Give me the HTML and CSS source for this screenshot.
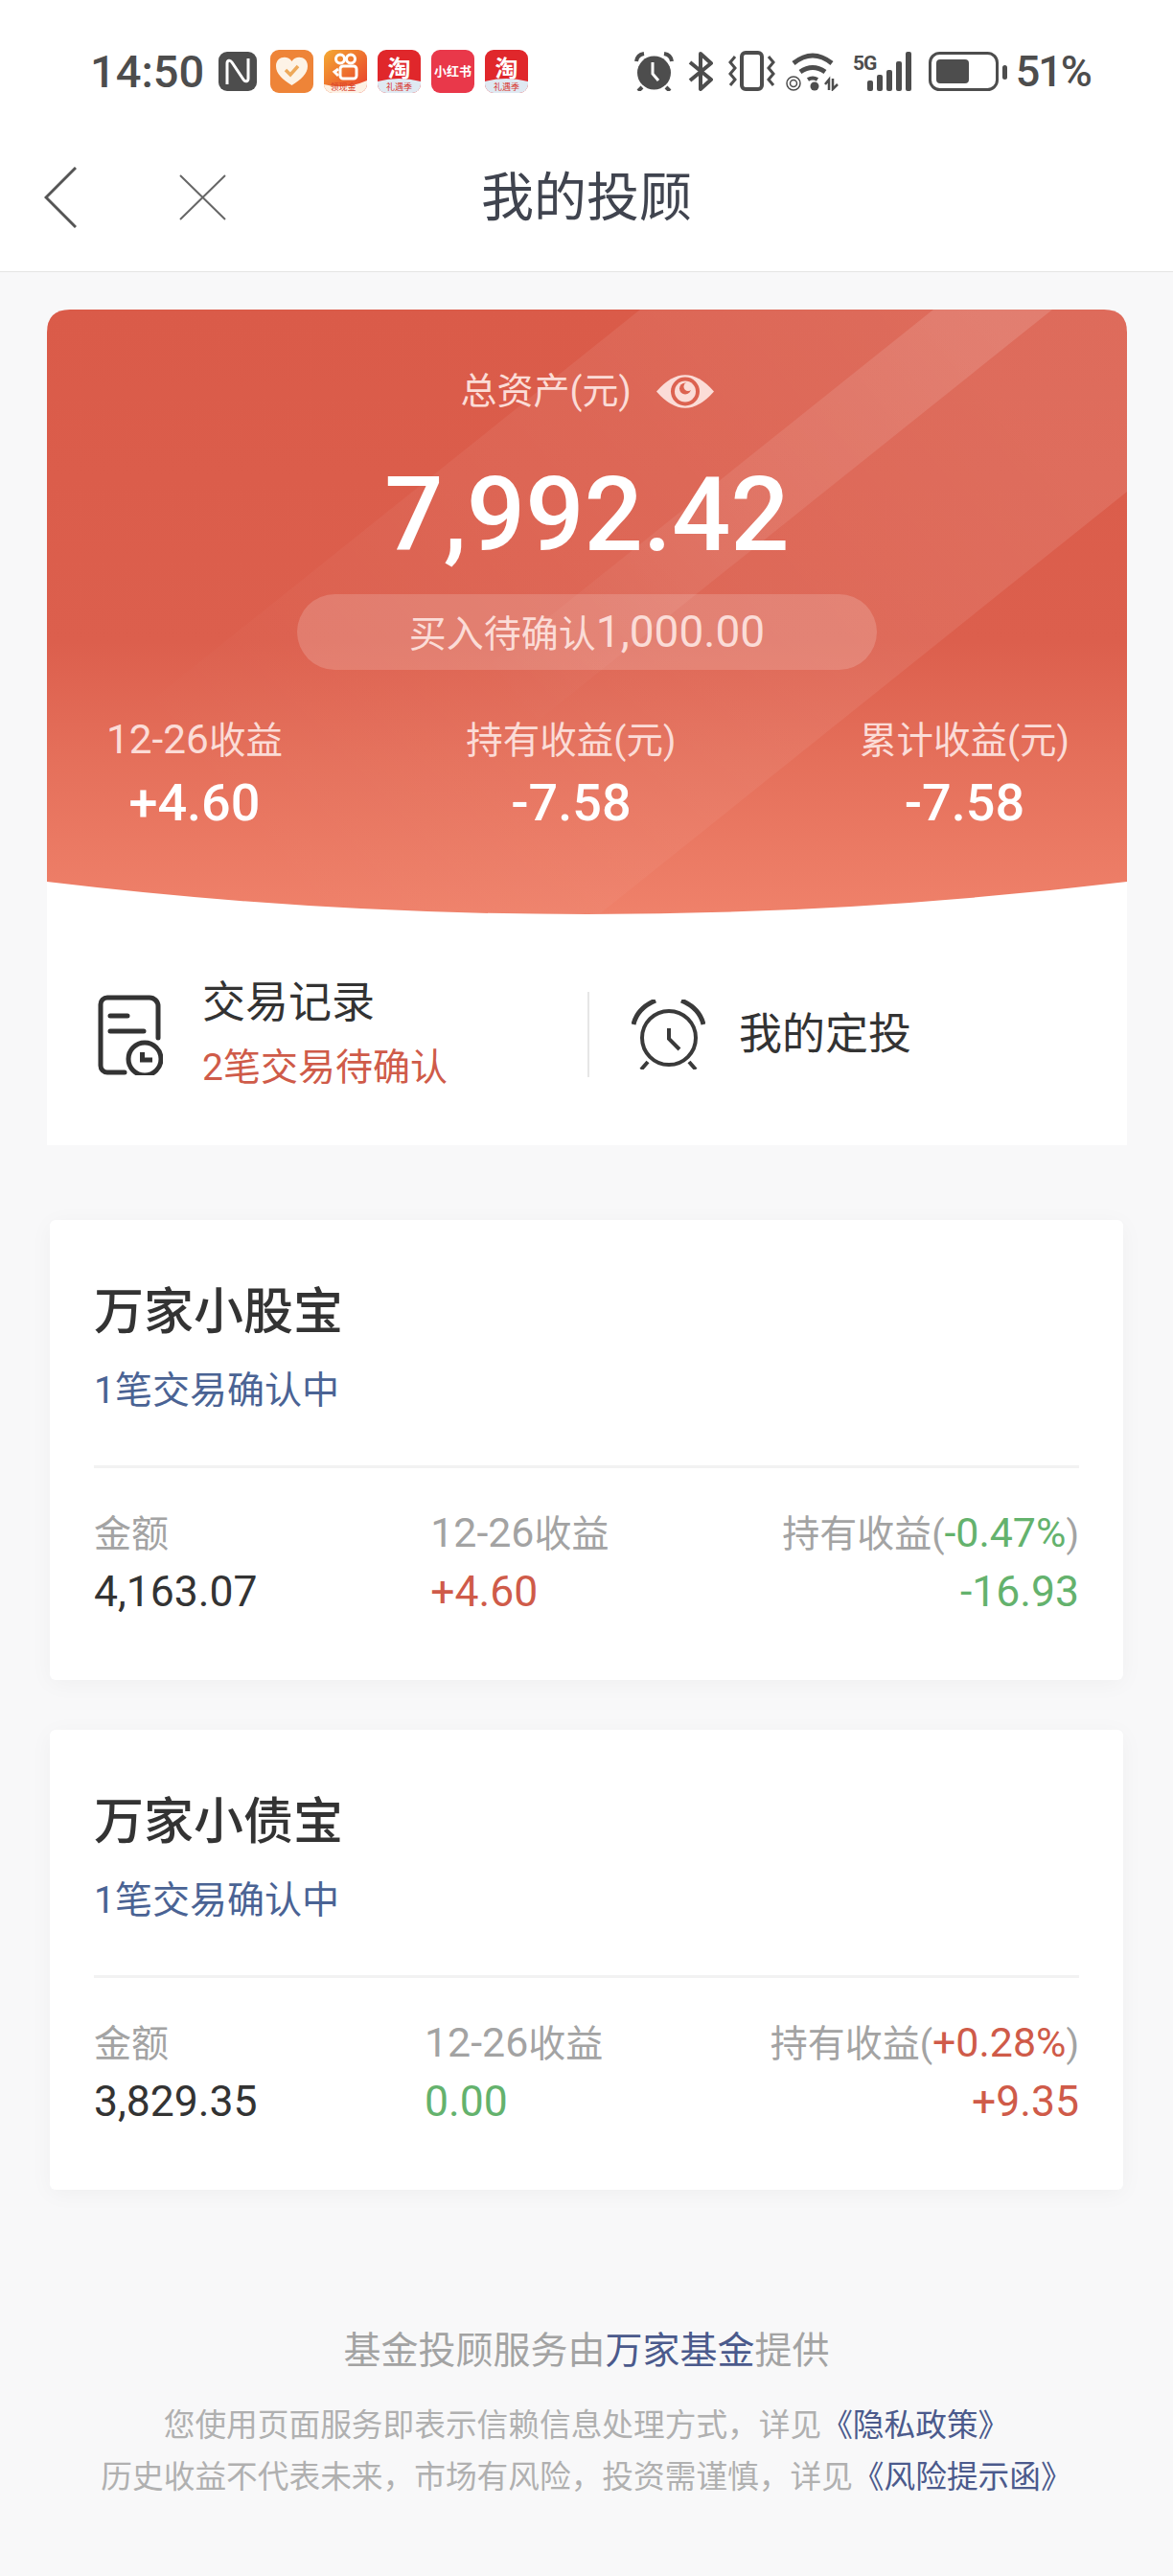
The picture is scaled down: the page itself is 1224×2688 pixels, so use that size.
FILE: index.html
```html
<!DOCTYPE html>
<html lang="zh-CN">
<head>
  <meta charset="UTF-8" />
  <title>我的投顾</title>
  <link rel="stylesheet" href="styles.css">
</head>
<body>

  <!-- status bar -->
  <div class="status">
    <div class="status-left">
      <span class="time">14:50</span>
      <svg class="nfc" width="40" height="41" viewBox="0 0 40 41">
        <rect width="40" height="41" rx="9" fill="#4d4d4d"/>
        <path d="M9 34V12c0-3 3-4 5-1l12 18c2 3 5 2 5-1V7" fill="none" stroke="#fff" stroke-width="3"/>
      </svg>
      <svg class="app" width="45" height="45" viewBox="0 0 45 45">
        <rect width="45" height="45" rx="9" fill="#ee8438"/>
        <path d="M22.5 37C13 31 6 25 6 17c0-10 12-12 16.5-5C27 5 39 7 39 17c0 8-7 14-16.5 20z" fill="#fdf3e6"/>
        <path d="M16 21l5 5 8-9" fill="none" stroke="#eda95a" stroke-width="3.5"/>
      </svg>
      <svg class="app" width="45" height="45" viewBox="0 0 45 45">
        <defs>
          <linearGradient id="ks" x1="0" y1="0" x2="1" y2="1">
            <stop offset="0" stop-color="#f4aa32"/>
            <stop offset="1" stop-color="#e8392c"/>
          </linearGradient>
        </defs>
        <rect width="45" height="45" rx="9" fill="url(#ks)"/>
        <path d="M0 36q22 6 45-4v4a9 9 0 0 1-9 9H9a9 9 0 0 1-9-9z" fill="#fdf1e4"/>
        <circle cx="17" cy="9.500" r="4.500" fill="none" stroke="#fff" stroke-width="3"/>
        <circle cx="28" cy="9.500" r="4.500" fill="none" stroke="#fff" stroke-width="3"/>
        <rect x="17" y="17" width="17" height="13" rx="3" fill="none" stroke="#fff" stroke-width="3"/>
        <path d="M15 20l-4 3 4 4" fill="none" stroke="#fff" stroke-width="3"/>
        <text x="20" y="42" class="tiny" fill="#d8402c">领现金</text>
      </svg>
      <svg class="app" width="45" height="45" viewBox="0 0 45 45">
        <rect width="45" height="45" rx="9" fill="#e0272b"/>
        <path d="M0 33q22-6 45 0v3a9 9 0 0 1-9 9H9a9 9 0 0 1-9-9z" fill="#dfe9f2"/>
        <text x="22.500" y="28" class="tao" fill="#fff">淘</text>
        <text x="22.500" y="42" class="tiny" fill="#d8352c">礼遇季</text>
      </svg>
      <svg class="app" width="45" height="45" viewBox="0 0 45 45">
        <rect width="45" height="45" rx="9" fill="#e9384a"/>
        <text x="22.500" y="27" class="xhs" fill="#fff">小红书</text>
      </svg>
      <svg class="app" width="45" height="45" viewBox="0 0 45 45">
        <rect width="45" height="45" rx="9" fill="#e0272b"/>
        <path d="M0 33q22-6 45 0v3a9 9 0 0 1-9 9H9a9 9 0 0 1-9-9z" fill="#dfe9f2"/>
        <text x="22.500" y="28" class="tao" fill="#fff">淘</text>
        <text x="22.500" y="42" class="tiny" fill="#d8352c">礼遇季</text>
      </svg>
    </div>
    <div class="status-right">
      <svg width="41" height="41" viewBox="0 0 41 41">
        <circle cx="20.500" cy="22" r="17.500" fill="#4d4d4d"/>
        <path d="M2 10q1-7 8-8M39 10q-1-7-8-8" fill="none" stroke="#4d4d4d" stroke-width="4"/>
        <path d="M8 37l-4 4M33 37l4 4" stroke="#4d4d4d" stroke-width="4"/>
        <path d="M19 11v12l6 7" fill="none" stroke="#fff" stroke-width="3"/>
      </svg>
      <svg width="27" height="41" viewBox="0 0 27 41">
        <path d="M2 11l22 18-11 10V2l11 10L2 30" fill="none" stroke="#4d4d4d" stroke-width="4" stroke-linejoin="round"/>
      </svg>
      <svg width="49" height="42" viewBox="0 0 49 42">
        <rect x="14" y="2" width="21" height="38" rx="4" fill="none" stroke="#4d4d4d" stroke-width="4"/>
        <path d="M7 6L2 12l5 6-5 6 5 6-5 6M42 6l5 6-5 6 5 6-5 6 5 6" fill="none" stroke="#4d4d4d" stroke-width="3"/>
      </svg>
      <svg class="wifi" width="58" height="42" viewBox="0 0 58 42">
        <path d="M9 13q20-16 40 0" fill="none" stroke="#4d4d4d" stroke-width="5"/>
        <path d="M16 22q13-9 26 0" fill="none" stroke="#4d4d4d" stroke-width="5"/>
        <path d="M24 30q5-3 10 0" fill="none" stroke="#4d4d4d" stroke-width="4"/>
        <circle cx="31" cy="37" r="4.500" fill="#4d4d4d"/>
        <circle cx="9" cy="34" r="7" fill="none" stroke="#4d4d4d" stroke-width="1.500"/>
        <circle cx="9" cy="34" r="3.500" fill="none" stroke="#4d4d4d" stroke-width="1.500"/>
        <path d="M46 41V30l-4 5M50 29v11l5-5" fill="none" stroke="#4d4d4d" stroke-width="2.500"/>
      </svg>
      <svg class="net" width="61" height="41" viewBox="0 0 61 41">
        <text x="0" y="19" class="fiveg" fill="#4d4d4d">5G</text>
        <rect x="15" y="30" width="6" height="11" rx="2" fill="#4d4d4d"/>
        <rect x="25" y="24" width="6" height="17" rx="2" fill="#4d4d4d"/>
        <rect x="35" y="19" width="6" height="22" rx="2" fill="#4d4d4d"/>
        <rect x="45" y="10" width="6" height="31" rx="2" fill="#4d4d4d"/>
        <rect x="55" y="0" width="6" height="41" rx="2" fill="#4d4d4d"/>
      </svg>
      <svg class="battery" width="82" height="41" viewBox="0 0 82 41">
        <rect x="1.500" y="1.500" width="70" height="38" rx="10" fill="none" stroke="#4d4d4d" stroke-width="3"/>
        <rect x="8" y="8" width="34" height="25" rx="4" fill="#4d4d4d"/>
        <rect x="77" y="14" width="5" height="15" rx="2.500" fill="#4d4d4d"/>
      </svg>
      <span class="percent">51%</span>
    </div>
  </div>

  <!-- nav -->
  <div class="nav">
    <div class="nav-icons">
      <svg width="34" height="64" viewBox="0 0 34 64">
        <path d="M33 1L2 32l31 31" fill="none" stroke="#555" stroke-width="3"/>
      </svg>
      <svg width="49" height="48" viewBox="0 0 49 48">
        <path d="M1 1l47 46M48 1L1 47" fill="none" stroke="#666" stroke-width="2"/>
      </svg>
    </div>
    <div class="nav-title">我的投顾</div>
    <div></div>
  </div>

  <div class="summary">
    <div class="hero">
      <svg class="hero-bg" width="1127" height="631" viewBox="0 0 1127 631">
        <defs>
          <linearGradient id="wide" gradientUnits="userSpaceOnUse" x1="1000" y1="80" x2="280" y2="656">
            <stop offset="0" stop-color="#fff" stop-opacity="0.1"/>
            <stop offset="0.55" stop-color="#fff" stop-opacity="0.05"/>
            <stop offset="1" stop-color="#fff" stop-opacity="0"/>
          </linearGradient>
          <linearGradient id="band" gradientUnits="userSpaceOnUse" x1="990" y1="0" x2="480" y2="408">
            <stop offset="0" stop-color="#fff" stop-opacity="0.13"/>
            <stop offset="0.6" stop-color="#fff" stop-opacity="0.07"/>
            <stop offset="1" stop-color="#fff" stop-opacity="0"/>
          </linearGradient>
        </defs>
        <polygon points="619,0 1127,0 1127,190 570,636 -176,636" fill="url(#wide)"/>
        <polygon points="925,0 1049,0 470,463 346,463" fill="url(#band)"/>
      </svg>
      <div class="total-label">
        总资产(元)
        <svg width="60" height="35" viewBox="0 0 60 35">
          <path d="M0 17.500Q30-17 60 17.500Q30 52 0 17.500z" fill="#fbdcd7"/>
          <circle cx="30" cy="17.500" r="15" fill="#dc6250"/>
          <circle cx="30" cy="17.500" r="11" fill="#fbdcd7"/>
          <circle cx="30" cy="14.500" r="6" fill="#dc6250"/>
          <circle cx="33" cy="12.500" r="4.500" fill="#fbdcd7"/>
        </svg>
      </div>
      <div class="total">7,992.42</div>
      <div class="pending">买入待确认<span class="pending-num">1,000.00</span></div>
      <div class="stats">
        <div class="stat">
          <div class="stat-label"><span class="num">12-26</span>收益</div>
          <div class="stat-value">+4.60</div>
        </div>
        <div class="stat">
          <div class="stat-label">持有收益(元)</div>
          <div class="stat-value">-7.58</div>
        </div>
        <div class="stat">
          <div class="stat-label">累计收益(元)</div>
          <div class="stat-value">-7.58</div>
        </div>
      </div>
    </div>

    <div class="actions">
      <div class="action action-left">
        <svg width="68" height="84" viewBox="0 0 68 84">
          <path d="M28 81H10a7 7 0 0 1-7-7V10a7 7 0 0 1 7-7h44a9 9 0 0 1 9 9v33" fill="none" stroke="#333" stroke-width="5" stroke-linecap="round"/>
          <path d="M13 22h18M13 38h35" fill="none" stroke="#333" stroke-width="5" stroke-linecap="round"/>
          <circle cx="49" cy="67" r="17" fill="none" stroke="#333" stroke-width="5"/>
          <path d="M46.500 60v8H57" fill="none" stroke="#333" stroke-width="5"/>
        </svg>
        <div class="action-text">
          <div class="action-title">交易记录</div>
          <div class="action-note">2笔交易待确认</div>
        </div>
      </div>
      <div class="action action-right">
        <svg width="77" height="73" viewBox="0 0 77 73">
          <circle cx="39" cy="40" r="28" fill="none" stroke="#3a3a3a" stroke-width="4"/>
          <path d="M2 26Q6 9 25 1M52 1Q71 9 75 26" fill="none" stroke="#3a3a3a" stroke-width="5"/>
          <path d="M39 30v11l11 11" fill="none" stroke="#3a3a3a" stroke-width="4"/>
          <path d="M17 65l-7 8M60 65l7 8" fill="none" stroke="#3a3a3a" stroke-width="4"/>
        </svg>
        <div class="action-title">我的定投</div>
      </div>
    </div>
  </div>

  <div class="fund">
    <div class="fund-name">万家小股宝</div>
    <div class="fund-note">1笔交易确认中</div>
    <div class="fund-line"></div>
    <div class="fund-row">
      <div>
        <div class="fund-label">金额</div>
        <div class="fund-value">4,163.07</div>
      </div>
      <div>
        <div class="fund-label"><span class="num">12-26</span>收益</div>
        <div class="fund-value red">+4.60</div>
      </div>
      <div class="right">
        <div class="fund-label">持有收益(<span class="num green">-0.47%</span>)</div>
        <div class="fund-value green">-16.93</div>
      </div>
    </div>
  </div>

  <div class="fund second">
    <div class="fund-name">万家小债宝</div>
    <div class="fund-note">1笔交易确认中</div>
    <div class="fund-line"></div>
    <div class="fund-row">
      <div>
        <div class="fund-label">金额</div>
        <div class="fund-value">3,829.35</div>
      </div>
      <div>
        <div class="fund-label"><span class="num">12-26</span>收益</div>
        <div class="fund-value green">0.00</div>
      </div>
      <div class="right">
        <div class="fund-label">持有收益(<span class="num red">+0.28%</span>)</div>
        <div class="fund-value red">+9.35</div>
      </div>
    </div>
  </div>

  <div class="footer">
    <div class="provider">基金投顾服务由<span class="link">万家基金</span>提供</div>
    <div class="legal">
      <div>您使用页面服务即表示信赖信息处理方式，详见<span class="link">《隐私政策》</span></div>
      <div>历史收益不代表未来，市场有风险，投资需谨慎，详见<span class="link">《风险提示函》</span></div>
    </div>
  </div>

</body>
</html>
```

FILE: styles.css
```css
* { margin: 0; padding: 0; box-sizing: border-box; }
body {
  font-family: Roboto, "Noto Sans CJK SC", sans-serif;
  background: #f8f8f9;
  color: #333;
  width: 1224px;
  min-height: 100vh;
}
svg { display: block; flex-shrink: 0; }

/* status bar */
.status {
  height: 140px;
  background: #fff;
  padding: 8px 86px 0 94px;
  display: flex;
  justify-content: space-between;
  align-items: center;
  color: #4d4d4d;
}
.status-left, .status-right {
  display: flex;
  align-items: center;
}
.time { font-size: 47px; font-weight: 500; width: 134px; }
.nfc { margin-right: 14px; }
.app { margin-right: 11px; }
.status-right { gap: 15px; }
.wifi { margin-left: -5px; }
.net { margin-left: -2px; }
.battery { margin-left: 3px; }
.percent { font-size: 45px; font-weight: 500; margin-left: -6px; letter-spacing: -2px; }
.tiny { font-size: 9px; text-anchor: middle; font-family: "Noto Sans CJK SC", sans-serif; }
.tao { font-size: 24px; text-anchor: middle; font-weight: 700; font-family: "Noto Sans CJK SC", sans-serif; }
.xhs { font-size: 13px; text-anchor: middle; font-weight: 700; font-family: "Noto Sans CJK SC", sans-serif; }
.fiveg { font-size: 21px; font-weight: 700; font-family: Roboto, sans-serif; letter-spacing: -1px; }

/* nav */
.nav {
  height: 144px;
  background: #fff;
  border-bottom: 1px solid #e4e4e4;
  padding: 0 0 11px 46px;
  display: grid;
  grid-template-columns: 1fr auto 1fr;
  align-items: center;
}
.nav-icons {
  display: flex;
  align-items: center;
  gap: 107px;
}
.nav-title {
  font-size: 55px;
  color: #40444f;
  line-height: 70px;
  margin-left: -46px;
}

/* top card */
.summary {
  width: 1127px;
  margin: 39px 0 0 49px;
  background: #fff;
  border-radius: 24px 24px 0 0;
}
.hero {
  position: relative;
  height: 631px;
  padding-top: 60px;
  background: linear-gradient(180deg, #da5b49 0%, #dc5f4d 55%, #e5705b 75%, #ef816a 100%);
  clip-path: path("M0 24Q0 0 24 0H1103Q1127 0 1127 24V597Q563 665 0 597Z");
  text-align: center;
}
.hero-bg { position: absolute; top: 0; left: 0; }
.total-label, .total, .pending, .stats { position: relative; }
.total-label {
  height: 50px;
  line-height: 50px;
  font-size: 38px;
  color: #fbdcd7;
  display: flex;
  justify-content: center;
  align-items: center;
  gap: 26px;
}
.total {
  margin-top: 44px;
  height: 120px;
  line-height: 120px;
  font-size: 108px;
  font-weight: 500;
  color: #fff;
}
.pending {
  width: 605px;
  height: 79px;
  line-height: 79px;
  margin: 23px 0 0 261px;
  border-radius: 40px;
  background: rgba(255, 255, 255, 0.17);
  color: #fbdcd7;
  font-size: 39px;
}
.pending-num { font-size: 46px; }
.stats {
  margin-top: 50px;
  padding: 0 60px 0 62px;
  display: flex;
  justify-content: space-between;
}
.stat-label {
  height: 48px;
  line-height: 48px;
  font-size: 38.500px;
  color: #fbdcd7;
}
.num { font-size: 1.1em; line-height: 1; }
.stat-value {
  margin-top: 11px;
  height: 60px;
  line-height: 60px;
  font-size: 54px;
  font-weight: 500;
  color: #fff;
}

.actions {
  height: 241px;
  padding-top: 10px;
  display: flex;
  align-items: center;
}
.action { display: flex; align-items: center; }
.action-left {
  width: 564px;
  padding-left: 53px;
  gap: 41px;
}
.action-text { margin-top: -3px; }
.action-right {
  height: 89px;
  padding-left: 44px;
  gap: 35px;
  border-left: 2px solid #e6e6e6;
}
.action-title {
  font-size: 45px;
  line-height: 60px;
  color: #333;
}
.action-note {
  font-size: 39px;
  line-height: 50px;
  margin-top: 12px;
  color: #cf5b49;
}

/* fund cards */
.fund {
  width: 1120px;
  height: 480px;
  margin: 78px 0 0 52px;
  padding: 62px 46px 0;
  background: #fff;
  border-radius: 6px;
  box-shadow: 0 4px 24px rgba(0, 0, 0, 0.04);
}
.fund.second { margin-top: 52px; }
.fund-name {
  font-size: 52px;
  font-weight: 500;
  line-height: 70px;
  color: #333;
}
.fund-note {
  margin-top: 21px;
  font-size: 39px;
  line-height: 50px;
  color: #4a6394;
}
.fund-line {
  margin-top: 53px;
  height: 3px;
  background: #f2f2f2;
}
.fund-row {
  margin-top: 45px;
  display: flex;
  justify-content: space-between;
}
.right { text-align: right; }
.fund-label {
  font-size: 39px;
  line-height: 48px;
  height: 48px;
  color: #a3a3a3;
}
.fund-value {
  margin-top: 10px;
  font-size: 44.500px;
  line-height: 52px;
  color: #333;
}
.fund-value.red, .fund-label .red { color: #cf5b49; }
.fund-value.green, .fund-label .green { color: #64b26d; }

/* footer */
.footer {
  margin-top: 143px;
  text-align: center;
}
.provider {
  font-size: 39px;
  line-height: 50px;
  color: #a3a3a3;
}
.legal {
  margin-top: 26px;
  font-size: 32.700px;
  line-height: 54px;
  color: #b0b0b0;
}
.link { color: #4b5a8c; }
```
